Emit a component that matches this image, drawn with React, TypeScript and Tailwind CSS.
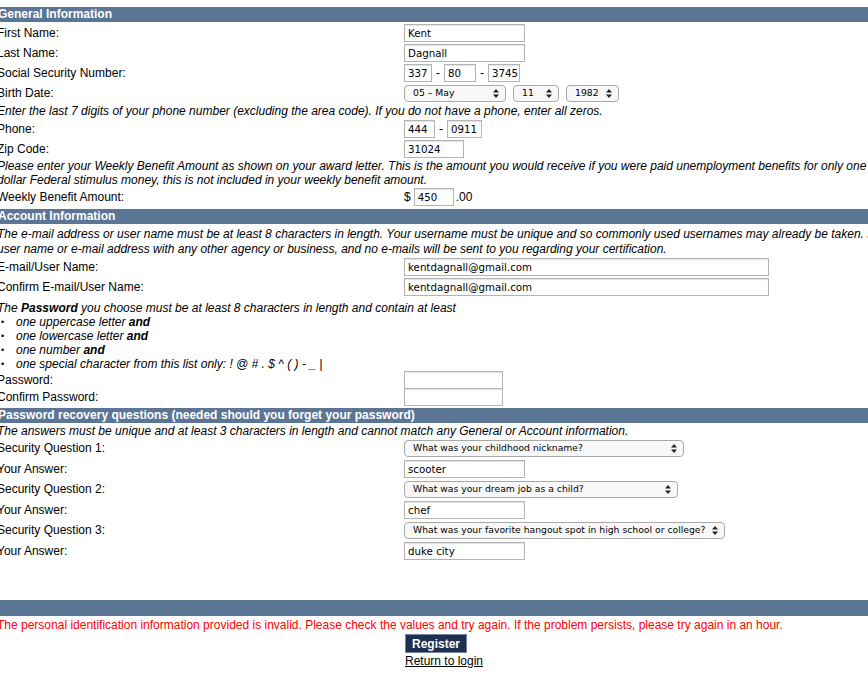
import React from 'react';

const box =
  'h-[18px] border border-[#b4b4b4] bg-white px-[3px] text-[10.25px] leading-[16px] text-black font-["DejaVu_Sans",sans-serif] whitespace-nowrap shadow-[inset_0_1px_1px_rgba(0,0,0,0.12)]';

function Box({ value = '', w }: { value?: string; w: string }) {
  return <div className={`${box} ${w}`}>{value}</div>;
}

function Select({ value, w }: { value: string; w: string }) {
  return (
    <div
      className={`flex h-[17px] items-center justify-between whitespace-nowrap rounded-[4px] border border-[#a9a9a9] bg-[#f8f8f8] pl-[8px] pr-[6px] text-[9.25px] text-black font-["DejaVu_Sans",sans-serif] ${w}`}
    >
      <span>{value}</span>
      <svg width="6" height="9" viewBox="0 0 6 9">
        <path d="M0 3.5 L3 0 L6 3.5 Z M0 5.5 L3 9 L6 5.5 Z" fill="#222" />
      </svg>
    </div>
  );
}

function Row({
  label,
  children,
  h = 'h-[20px]'
}: {
  label: string;
  children?: React.ReactNode;
  h?: string;
}) {
  return (
    <div className={`flex items-center ${h}`}>
      <div className="w-[407px] shrink-0">{label}</div>
      <div className="flex items-center">{children}</div>
    </div>
  );
}

function Header({ title }: { title: string }) {
  return (
    <div className="h-[15px] bg-[#5b7594] pl-[1px] text-[12px] font-bold leading-[15px] text-white">
      {title}
    </div>
  );
}

export default function App() {
  return (
    <div className='min-h-[674px] bg-white text-[12px] leading-[14px] text-black font-["Liberation_Sans",Arial,sans-serif]'>
      <div className="ml-[-3px] pt-[7px]">
        {/* GENERAL */}
        <Header title="General Information" />
        <div className="pt-[1px]">
          <Row label="First Name:">
            <Box value="Kent" w="w-[121px]" />
          </Row>
          <Row label="Last Name:">
            <Box value="Dagnall" w="w-[121px]" />
          </Row>
          <Row label="Social Security Number:">
            <Box value="337" w="w-[28px]" />
            <span className="mx-[4px]">-</span>
            <Box value="80" w="w-[32px]" />
            <span className="mx-[4px]">-</span>
            <Box value="3745" w="w-[32px]" />
          </Row>
          <Row label="Birth Date:">
            <Select value="05 – May" w="w-[102px]" />
            <div className="w-[7px]" />
            <Select value="11" w="w-[46px]" />
            <div className="w-[7px]" />
            <Select value="1982" w="w-[53px]" />
          </Row>
          <p className="py-[1px] italic">
            Enter the last 7 digits of your phone number (excluding the area code). If you do not have a phone, enter all zeros.
          </p>
          <Row label="Phone:">
            <Box value="444" w="w-[31px]" />
            <span className="mx-[4px]">-</span>
            <Box value="0911" w="w-[35px]" />
          </Row>
          <Row label="Zip Code:">
            <Box value="31024" w="w-[60px]" />
          </Row>
          <p className="whitespace-nowrap italic">
            Please enter your Weekly Benefit Amount as shown on your award letter. This is the amount you would receive if you were paid unemployment benefits for only one week, not including any
            <br />
            dollar Federal stimulus money, this is not included in your weekly benefit amount.
          </p>
          <Row label="Weekly Benefit Amount:" h="h-[19px]">
            <span className="mr-[3px]">$</span>
            <Box value="450" w="w-[40px]" />
            <span className="ml-[2px]">.00</span>
          </Row>
        </div>

        {/* ACCOUNT */}
        <div className="mt-[3px]">
          <Header title="Account Information" />
        </div>
        <div className="pt-[3px]">
          <p className="whitespace-nowrap italic leading-[15px]">
            The e-mail address or user name must be at least 8 characters in length. Your username must be unique and so commonly used usernames may already be taken. Do not share your
            <br />
            user name or e-mail address with any other agency or business, and no e-mails will be sent to you regarding your certification.
          </p>
          <Row label="E-mail/User Name:">
            <Box value="kentdagnall@gmail.com" w="w-[365px]" />
          </Row>
          <Row label="Confirm E-mail/User Name:">
            <Box value="kentdagnall@gmail.com" w="w-[365px]" />
          </Row>
          <div className="pt-[4px] italic">
            <p>
              The <b>Password</b> you choose must be at least 8 characters in length and contain at least
            </p>
            {[
              <>one uppercase letter <b>and</b></>,
              <>one lowercase letter <b>and</b></>,
              <>one number <b>and</b></>,
              <>one special character from this list only: ! @ # . $ ^ ( ) - _ |</>
            ].map((item, i) => (
              <div key={i} className="flex">
                <span className="w-[19px] pl-[4px] text-[9px] not-italic">•</span>
                <span>{item}</span>
              </div>
            ))}
          </div>
          <Row label="Password:" h="h-[17px]">
            <Box w="w-[99px] h-[17px]" />
          </Row>
          <Row label="Confirm Password:" h="h-[17px]">
            <Box w="w-[99px] h-[17px]" />
          </Row>
        </div>

        {/* RECOVERY */}
        <div className="mt-[3px]">
          <Header title="Password recovery questions (needed should you forget your password)" />
        </div>
        <div className="pt-[1px]">
          <p className="italic">
            The answers must be unique and at least 3 characters in length and cannot match any General or Account information.
          </p>
          <Row label="Security Question 1:" h="h-[20px]">
            <Select value="What was your childhood nickname?" w="w-[280px]" />
          </Row>
          <Row label="Your Answer:" h="h-[21px]">
            <Box value="scooter" w="w-[121px]" />
          </Row>
          <Row label="Security Question 2:" h="h-[20px]">
            <Select value="What was your dream job as a child?" w="w-[274px]" />
          </Row>
          <Row label="Your Answer:" h="h-[21px]">
            <Box value="chef" w="w-[121px]" />
          </Row>
          <Row label="Security Question 3:" h="h-[20px]">
            <Select value="What was your favorite hangout spot in high school or college?" w="w-[321px]" />
          </Row>
          <Row label="Your Answer:" h="h-[21px]">
            <Box value="duke city" w="w-[121px]" />
          </Row>
        </div>

        {/* FOOTER */}
        <div className="mt-[39px] h-[16px] bg-[#5b7594]" />
        <p className="pt-[2px] whitespace-nowrap text-[#ff0000]">
          The personal identification information provided is invalid. Please check the values and try again. If the problem persists, please try again in an hour.
        </p>
        <div className="ml-[408px] mt-[2px] flex flex-col items-start">
          <button className="h-[19px] border border-[#7a86a0] bg-[#1e3052] px-[6px] text-[12px] font-bold leading-[16px] text-white">
            Register
          </button>
          <a className="mt-[1px] text-black underline">Return to login</a>
        </div>
      </div>
    </div>
  );
}
